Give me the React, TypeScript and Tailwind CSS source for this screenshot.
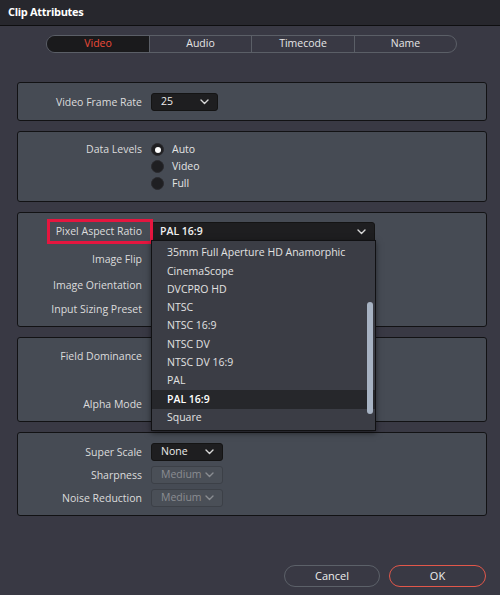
import React from "react";

const Chevron = ({ color = "#d8d8d8" }: { color?: string }) => (
  <svg width="9" height="6" viewBox="0 0 9 6" className="shrink-0">
    <polyline points="1,1 4.5,4.5 8,1" fill="none" stroke={color} strokeWidth="1.4" strokeLinecap="round" strokeLinejoin="round" />
  </svg>
);

const Label = ({ children }: { children: React.ReactNode }) => (
  <div className="w-[124px] shrink-0 text-right text-[10.5px] text-[#dcdcdc] pt-[1px]">{children}</div>
);

const Select = ({ value, width, disabled = false }: { value: string; width: string; disabled?: boolean }) =>
  disabled ? (
    <div className={`${width} h-[18px] rounded-[3px] border border-[#3c4047] bg-[#4a4f57] flex items-center justify-between pl-[9px] pr-[8px] text-[10.5px] text-[#8a8d92]`}>
      <span>{value}</span>
      <Chevron color="#8a8d92" />
    </div>
  ) : (
    <div className={`${width} h-[18px] rounded-[3px] border border-[#141414] bg-[#1e1e20] flex items-center justify-between pl-[9px] pr-[8px] text-[10.5px] text-[#ececec]`}>
      <span>{value}</span>
      <Chevron />
    </div>
  );

const Radio = ({ checked, label }: { checked?: boolean; label: string }) => (
  <div className="flex items-center h-[17px]">
    <div className="w-[13px] h-[13px] rounded-full bg-[#1f1f22] border border-[#2a2a2e] flex items-center justify-center">
      {checked && <div className="w-[6px] h-[6px] rounded-full bg-white" />}
    </div>
    <span className="ml-[8px] text-[10.5px] text-[#e4e4e4]">{label}</span>
  </div>
);

const Panel = ({ children, className = "" }: { children: React.ReactNode; className?: string }) => (
  <div className={`relative rounded-[3px] border border-[#121214] bg-[#464b54] ${className}`}>{children}</div>
);

const items = [
  "35mm Full Aperture HD Anamorphic",
  "CinemaScope",
  "DVCPRO HD",
  "NTSC",
  "NTSC 16:9",
  "NTSC DV",
  "NTSC DV 16:9",
  "PAL",
  "PAL 16:9",
  "Square",
];

export default function App() {
  return (
    <div
      className="w-[500px] h-[595px] bg-[#393944] flex flex-col overflow-hidden"
      style={{ fontFamily: '"Open Sans", "Noto Sans", sans-serif' }}
    >
      {/* Title bar */}
      <div className="h-[26px] shrink-0 bg-[#27272d] border-b border-[#0e0e10] flex items-center pl-[8px]">
        <span className="text-[11px] font-bold text-white tracking-[-0.3px]">Clip Attributes</span>
      </div>

      {/* Tabs */}
      <div className="flex justify-center mt-[9px] pl-[3px]">
        <div className="flex h-[18px] rounded-full border border-[#5b5f67] overflow-hidden text-[10.5px]">
          <div className="w-[102px] bg-[#1a1a1c] flex items-center justify-center text-[#ee4b39]">Video</div>
          <div className="w-[102px] border-l border-[#5b5f67] flex items-center justify-center text-[#e6e6e6]">Audio</div>
          <div className="w-[103px] border-l border-[#5b5f67] flex items-center justify-center text-[#e6e6e6]">Timecode</div>
          <div className="w-[102px] border-l border-[#5b5f67] flex items-center justify-center text-[#e6e6e6]">Name</div>
        </div>
      </div>

      <div className="flex flex-col gap-[10px] ml-[17px] mr-[13px] mt-[29px]">
        {/* Panel 1 */}
        <Panel className="h-[39px]">
          <div className="flex items-center gap-[9px] mt-[10px]">
            <Label>Video Frame Rate</Label>
            <Select value="25" width="w-[67px]" />
          </div>
        </Panel>

        {/* Panel 2 */}
        <Panel className="h-[71px]">
          <div className="flex gap-[9px] mt-[9px]">
            <div className="h-[17px] flex items-center">
              <Label>Data Levels</Label>
            </div>
            <div className="flex flex-col">
              <Radio checked label="Auto" />
              <Radio label="Video" />
              <Radio label="Full" />
            </div>
          </div>
        </Panel>

        {/* Panel 3 */}
        <Panel className="h-[115px] z-10">
          <div className="flex items-center gap-[9px] mt-[9px]">
            <Label>Pixel Aspect Ratio</Label>
            <div className="w-[224px] h-[19px] rounded-t-[3px] border border-[#141414] bg-[#1e1e20] flex items-center justify-between pl-[8px] pr-[8px] text-[10.5px] text-[#f0f0f0] font-semibold">
              <span>PAL 16:9</span>
              <Chevron />
            </div>
          </div>
          <div className="flex items-center h-[18px] mt-[9px]">
            <Label>Image Flip</Label>
          </div>
          <div className="flex items-center h-[18px] mt-[8px]">
            <Label>Image Orientation</Label>
          </div>
          <div className="flex items-center h-[18px] mt-[6px]">
            <Label>Input Sizing Preset</Label>
          </div>

          {/* Red highlight box */}
          <div className="absolute left-[29px] top-[6px] w-[106px] h-[25px] border-[3px] border-[#e5163f] pointer-events-none" />

          {/* Dropdown list */}
          <div className="absolute left-[133px] top-[27px] w-[225px] h-[191px] bg-[#3b3d45] border border-[#111113] shadow-[0_2px_6px_rgba(0,0,0,0.5)] pt-[3px]">
            {items.map((it) => (
              <div
                key={it}
                className={`h-[18.3px] flex items-center pl-[15px] text-[10.5px] ${
                  it === "PAL 16:9" ? "bg-[#26272b] text-white font-semibold" : "text-[#e2e2e2]"
                }`}
              >
                {it}
              </div>
            ))}
            <div className="absolute right-[2px] top-[61px] w-[6px] h-[112px] rounded-full bg-[#a7b3c3]" />
          </div>
        </Panel>

        {/* Panel 4 */}
        <Panel className="h-[85px]">
          <div className="flex items-center h-[18px] mt-[9px]">
            <Label>Field Dominance</Label>
          </div>
          <div className="flex items-center h-[18px] mt-[30px]">
            <Label>Alpha Mode</Label>
          </div>
        </Panel>

        {/* Panel 5 */}
        <Panel className="h-[84px]">
          <div className="flex flex-col gap-[5px] mt-[10px]">
            <div className="flex items-center gap-[9px]">
              <Label>Super Scale</Label>
              <Select value="None" width="w-[72px]" />
            </div>
            <div className="flex items-center gap-[9px]">
              <Label>Sharpness</Label>
              <Select value="Medium" width="w-[72px]" disabled />
            </div>
            <div className="flex items-center gap-[9px]">
              <Label>Noise Reduction</Label>
              <Select value="Medium" width="w-[72px]" disabled />
            </div>
          </div>
        </Panel>
      </div>

      {/* Buttons */}
      <div className="mt-auto mb-[8px] flex justify-end gap-[9px] mr-[14px]">
        <div className="w-[96px] h-[22px] rounded-full border border-[#5c6169] flex items-center justify-center text-[11px] text-[#ededed]">
          Cancel
        </div>
        <div className="w-[97px] h-[22px] rounded-full border border-[#e2574a] flex items-center justify-center text-[11px] text-[#ededed]">
          OK
        </div>
      </div>
    </div>
  );
}
